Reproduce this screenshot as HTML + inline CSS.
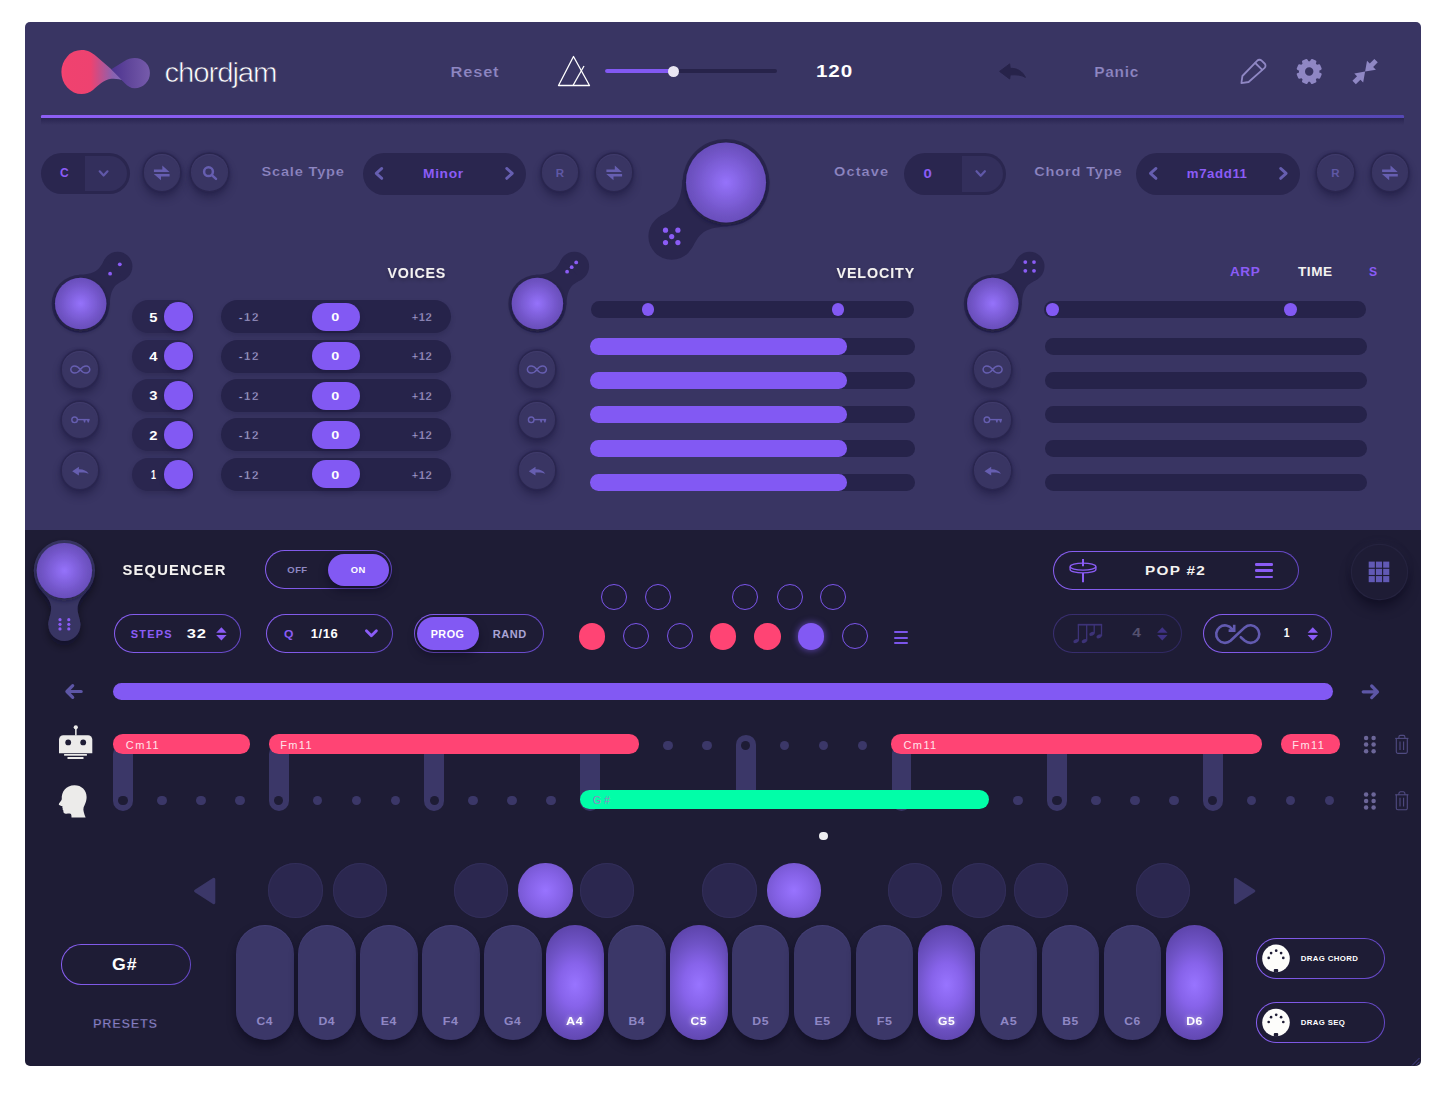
<!DOCTYPE html>
<html lang="en"><head><meta charset="utf-8"><title>chordjam</title>
<style>
html,body{margin:0;padding:0;background:#fff;}
body{width:1445px;height:1098px;position:relative;overflow:hidden;font-family:"Liberation Sans",sans-serif;}
#ui div{position:absolute;}
#ov{position:absolute;left:0;top:0;width:1445px;height:1098px;}
#ov text{font-family:"Liberation Sans",sans-serif;}
</style></head><body>
<div id="ui">
<div style="left:25px;top:22px;width:1395.5px;height:1044px;border-radius:5px;background:linear-gradient(#393563 0,#393563 508px,#1e1c35 508px);"></div>
<div  style="left:604.50px;top:69.00px;width:172.50px;height:4.00px;background:#27234a;border-radius:2.00px;"></div>
<div  style="left:604.50px;top:69.00px;width:70.00px;height:4.00px;background:#8259f3;border-radius:2.00px;"></div>
<div  style="left:668.00px;top:65.50px;width:11.00px;height:11.00px;background:#e9e6f2;border-radius:5.50px;"></div>
<div style="left:41.4px;top:118px;width:1362.8px;height:7px;background:linear-gradient(rgba(28,24,66,.55),rgba(28,24,66,0));"></div>
<div style="left:41.4px;top:115.4px;width:1362.8px;height:2.5px;background:linear-gradient(90deg,#8d5ff5,#7a56e0 45%,#5547b5);border-radius:1.3px 1.3px 0 0;"></div>
<div  style="left:41.00px;top:152.50px;width:89.00px;height:41.50px;background:#2a264f;border-radius:20.75px;"></div>
<div style="left:84.7px;top:155.5px;width:42.3px;height:35.5px;background:#332f5c;border-radius:0 17.75px 17.75px 0"></div>
<div  style="left:143.50px;top:154.00px;width:36.60px;height:36.60px;background:#393563;border-radius:18.30px;box-shadow:0 0 0 1.4px #2a264f,0 0 3px 1.5px rgba(36,32,76,.7),0 6px 8px 1px rgba(22,18,52,.42),inset 0 1px 1px rgba(90,84,140,.25);"></div>
<div  style="left:191.40px;top:154.00px;width:36.60px;height:36.60px;background:#393563;border-radius:18.30px;box-shadow:0 0 0 1.4px #2a264f,0 0 3px 1.5px rgba(36,32,76,.7),0 6px 8px 1px rgba(22,18,52,.42),inset 0 1px 1px rgba(90,84,140,.25);"></div>
<div  style="left:362.50px;top:152.50px;width:163.50px;height:42.00px;background:#2a264f;border-radius:21.00px;"></div>
<div  style="left:541.70px;top:154.30px;width:36.60px;height:36.60px;background:#393563;border-radius:18.30px;box-shadow:0 0 0 1.4px #2a264f,0 0 3px 1.5px rgba(36,32,76,.7),0 6px 8px 1px rgba(22,18,52,.42),inset 0 1px 1px rgba(90,84,140,.25);"></div>
<div  style="left:595.90px;top:154.30px;width:36.60px;height:36.60px;background:#393563;border-radius:18.30px;box-shadow:0 0 0 1.4px #2a264f,0 0 3px 1.5px rgba(36,32,76,.7),0 6px 8px 1px rgba(22,18,52,.42),inset 0 1px 1px rgba(90,84,140,.25);"></div>
<div  style="left:904.10px;top:152.50px;width:102.30px;height:42.00px;background:#2a264f;border-radius:21.00px;"></div>
<div style="left:961.6px;top:155.5px;width:41.799999999999955px;height:36px;background:#332f5c;border-radius:0 18.0px 18.0px 0"></div>
<div  style="left:1136.20px;top:152.50px;width:164.00px;height:42.00px;background:#2a264f;border-radius:21.00px;"></div>
<div  style="left:1317.10px;top:154.30px;width:36.60px;height:36.60px;background:#393563;border-radius:18.30px;box-shadow:0 0 0 1.4px #2a264f,0 0 3px 1.5px rgba(36,32,76,.7),0 6px 8px 1px rgba(22,18,52,.42),inset 0 1px 1px rgba(90,84,140,.25);"></div>
<div  style="left:1371.60px;top:154.30px;width:36.60px;height:36.60px;background:#393563;border-radius:18.30px;box-shadow:0 0 0 1.4px #2a264f,0 0 3px 1.5px rgba(36,32,76,.7),0 6px 8px 1px rgba(22,18,52,.42),inset 0 1px 1px rgba(90,84,140,.25);"></div>
<div  style="left:62.10px;top:351.20px;width:36.40px;height:36.40px;background:#393563;border-radius:18.20px;box-shadow:0 0 0 1.4px #2a264f,0 0 3px 1.5px rgba(36,32,76,.7),0 6px 8px 1px rgba(22,18,52,.42),inset 0 1px 1px rgba(90,84,140,.25);"></div>
<div  style="left:62.10px;top:401.60px;width:36.40px;height:36.40px;background:#393563;border-radius:18.20px;box-shadow:0 0 0 1.4px #2a264f,0 0 3px 1.5px rgba(36,32,76,.7),0 6px 8px 1px rgba(22,18,52,.42),inset 0 1px 1px rgba(90,84,140,.25);"></div>
<div  style="left:62.10px;top:452.40px;width:36.40px;height:36.40px;background:#393563;border-radius:18.20px;box-shadow:0 0 0 1.4px #2a264f,0 0 3px 1.5px rgba(36,32,76,.7),0 6px 8px 1px rgba(22,18,52,.42),inset 0 1px 1px rgba(90,84,140,.25);"></div>
<div  style="left:132.00px;top:300.10px;width:62.00px;height:33.00px;background:#2a264f;border-radius:16.50px;box-shadow:0 3px 5px rgba(22,18,52,.25);"></div>
<div  style="left:164.15px;top:302.35px;width:28.50px;height:28.50px;background:#8259f3;border-radius:14.25px;box-shadow:0 3px 5px rgba(22,18,52,.35);"></div>
<div  style="left:221.20px;top:300.10px;width:230.00px;height:33.00px;background:#26234a;border-radius:16.50px;box-shadow:0 3px 5px rgba(22,18,52,.2);"></div>
<div  style="left:311.80px;top:302.60px;width:48.00px;height:28.00px;background:#8259f3;border-radius:14.00px;box-shadow:0 3px 5px rgba(22,18,52,.35);"></div>
<div  style="left:132.00px;top:339.55px;width:62.00px;height:33.00px;background:#2a264f;border-radius:16.50px;box-shadow:0 3px 5px rgba(22,18,52,.25);"></div>
<div  style="left:164.15px;top:341.80px;width:28.50px;height:28.50px;background:#8259f3;border-radius:14.25px;box-shadow:0 3px 5px rgba(22,18,52,.35);"></div>
<div  style="left:221.20px;top:339.55px;width:230.00px;height:33.00px;background:#26234a;border-radius:16.50px;box-shadow:0 3px 5px rgba(22,18,52,.2);"></div>
<div  style="left:311.80px;top:342.05px;width:48.00px;height:28.00px;background:#8259f3;border-radius:14.00px;box-shadow:0 3px 5px rgba(22,18,52,.35);"></div>
<div  style="left:132.00px;top:379.00px;width:62.00px;height:33.00px;background:#2a264f;border-radius:16.50px;box-shadow:0 3px 5px rgba(22,18,52,.25);"></div>
<div  style="left:164.15px;top:381.25px;width:28.50px;height:28.50px;background:#8259f3;border-radius:14.25px;box-shadow:0 3px 5px rgba(22,18,52,.35);"></div>
<div  style="left:221.20px;top:379.00px;width:230.00px;height:33.00px;background:#26234a;border-radius:16.50px;box-shadow:0 3px 5px rgba(22,18,52,.2);"></div>
<div  style="left:311.80px;top:381.50px;width:48.00px;height:28.00px;background:#8259f3;border-radius:14.00px;box-shadow:0 3px 5px rgba(22,18,52,.35);"></div>
<div  style="left:132.00px;top:418.45px;width:62.00px;height:33.00px;background:#2a264f;border-radius:16.50px;box-shadow:0 3px 5px rgba(22,18,52,.25);"></div>
<div  style="left:164.15px;top:420.70px;width:28.50px;height:28.50px;background:#8259f3;border-radius:14.25px;box-shadow:0 3px 5px rgba(22,18,52,.35);"></div>
<div  style="left:221.20px;top:418.45px;width:230.00px;height:33.00px;background:#26234a;border-radius:16.50px;box-shadow:0 3px 5px rgba(22,18,52,.2);"></div>
<div  style="left:311.80px;top:420.95px;width:48.00px;height:28.00px;background:#8259f3;border-radius:14.00px;box-shadow:0 3px 5px rgba(22,18,52,.35);"></div>
<div  style="left:132.00px;top:457.90px;width:62.00px;height:33.00px;background:#2a264f;border-radius:16.50px;box-shadow:0 3px 5px rgba(22,18,52,.25);"></div>
<div  style="left:164.15px;top:460.15px;width:28.50px;height:28.50px;background:#8259f3;border-radius:14.25px;box-shadow:0 3px 5px rgba(22,18,52,.35);"></div>
<div  style="left:221.20px;top:457.90px;width:230.00px;height:33.00px;background:#26234a;border-radius:16.50px;box-shadow:0 3px 5px rgba(22,18,52,.2);"></div>
<div  style="left:311.80px;top:460.40px;width:48.00px;height:28.00px;background:#8259f3;border-radius:14.00px;box-shadow:0 3px 5px rgba(22,18,52,.35);"></div>
<div  style="left:518.70px;top:351.20px;width:36.40px;height:36.40px;background:#393563;border-radius:18.20px;box-shadow:0 0 0 1.4px #2a264f,0 0 3px 1.5px rgba(36,32,76,.7),0 6px 8px 1px rgba(22,18,52,.42),inset 0 1px 1px rgba(90,84,140,.25);"></div>
<div  style="left:518.70px;top:401.60px;width:36.40px;height:36.40px;background:#393563;border-radius:18.20px;box-shadow:0 0 0 1.4px #2a264f,0 0 3px 1.5px rgba(36,32,76,.7),0 6px 8px 1px rgba(22,18,52,.42),inset 0 1px 1px rgba(90,84,140,.25);"></div>
<div  style="left:518.70px;top:452.40px;width:36.40px;height:36.40px;background:#393563;border-radius:18.20px;box-shadow:0 0 0 1.4px #2a264f,0 0 3px 1.5px rgba(36,32,76,.7),0 6px 8px 1px rgba(22,18,52,.42),inset 0 1px 1px rgba(90,84,140,.25);"></div>
<div  style="left:591.20px;top:301.20px;width:322.40px;height:16.60px;background:#26234a;border-radius:8.30px;"></div>
<div  style="left:641.50px;top:303.10px;width:12.80px;height:12.80px;background:#8259f3;border-radius:6.40px;"></div>
<div  style="left:831.50px;top:303.10px;width:12.80px;height:12.80px;background:#8259f3;border-radius:6.40px;"></div>
<div  style="left:590.00px;top:338.10px;width:325.40px;height:16.60px;background:#26234a;border-radius:8.30px;"></div>
<div  style="left:590.00px;top:338.10px;width:257.40px;height:16.60px;background:#8259f3;border-radius:8.30px;"></div>
<div  style="left:590.00px;top:372.15px;width:325.40px;height:16.60px;background:#26234a;border-radius:8.30px;"></div>
<div  style="left:590.00px;top:372.15px;width:257.40px;height:16.60px;background:#8259f3;border-radius:8.30px;"></div>
<div  style="left:590.00px;top:406.20px;width:325.40px;height:16.60px;background:#26234a;border-radius:8.30px;"></div>
<div  style="left:590.00px;top:406.20px;width:257.40px;height:16.60px;background:#8259f3;border-radius:8.30px;"></div>
<div  style="left:590.00px;top:440.25px;width:325.40px;height:16.60px;background:#26234a;border-radius:8.30px;"></div>
<div  style="left:590.00px;top:440.25px;width:257.40px;height:16.60px;background:#8259f3;border-radius:8.30px;"></div>
<div  style="left:590.00px;top:474.30px;width:325.40px;height:16.60px;background:#26234a;border-radius:8.30px;"></div>
<div  style="left:590.00px;top:474.30px;width:257.40px;height:16.60px;background:#8259f3;border-radius:8.30px;"></div>
<div  style="left:974.40px;top:351.20px;width:36.40px;height:36.40px;background:#393563;border-radius:18.20px;box-shadow:0 0 0 1.4px #2a264f,0 0 3px 1.5px rgba(36,32,76,.7),0 6px 8px 1px rgba(22,18,52,.42),inset 0 1px 1px rgba(90,84,140,.25);"></div>
<div  style="left:974.40px;top:401.60px;width:36.40px;height:36.40px;background:#393563;border-radius:18.20px;box-shadow:0 0 0 1.4px #2a264f,0 0 3px 1.5px rgba(36,32,76,.7),0 6px 8px 1px rgba(22,18,52,.42),inset 0 1px 1px rgba(90,84,140,.25);"></div>
<div  style="left:974.40px;top:452.40px;width:36.40px;height:36.40px;background:#393563;border-radius:18.20px;box-shadow:0 0 0 1.4px #2a264f,0 0 3px 1.5px rgba(36,32,76,.7),0 6px 8px 1px rgba(22,18,52,.42),inset 0 1px 1px rgba(90,84,140,.25);"></div>
<div  style="left:1044.10px;top:301.20px;width:322.00px;height:16.60px;background:#26234a;border-radius:8.30px;"></div>
<div  style="left:1046.00px;top:303.10px;width:12.80px;height:12.80px;background:#8259f3;border-radius:6.40px;"></div>
<div  style="left:1284.30px;top:303.10px;width:12.80px;height:12.80px;background:#8259f3;border-radius:6.40px;"></div>
<div  style="left:1045.00px;top:338.10px;width:322.20px;height:16.60px;background:#26234a;border-radius:8.30px;"></div>
<div  style="left:1045.00px;top:372.15px;width:322.20px;height:16.60px;background:#26234a;border-radius:8.30px;"></div>
<div  style="left:1045.00px;top:406.20px;width:322.20px;height:16.60px;background:#26234a;border-radius:8.30px;"></div>
<div  style="left:1045.00px;top:440.25px;width:322.20px;height:16.60px;background:#26234a;border-radius:8.30px;"></div>
<div  style="left:1045.00px;top:474.30px;width:322.20px;height:16.60px;background:#26234a;border-radius:8.30px;"></div>
<div style="left:265.00px;top:550.00px;width:126.70px;height:39.40px;box-sizing:border-box;border-radius:19.7px;border:1.6px solid transparent;background:linear-gradient(#1e1c35,#1e1c35) padding-box,linear-gradient(100deg,#8a60f5,#6447c4) border-box;"></div>
<div  style="left:328.40px;top:553.50px;width:61.00px;height:32.60px;background:#8259f3;border-radius:16.30px;box-shadow:0 5px 8px rgba(10,8,30,.5);"></div>
<div style="left:114.10px;top:613.70px;width:127.10px;height:39.20px;box-sizing:border-box;border-radius:19.6px;border:1.6px solid transparent;background:linear-gradient(#1e1c35,#1e1c35) padding-box,linear-gradient(100deg,#8a60f5,#6447c4) border-box;"></div>
<div style="left:266.10px;top:613.70px;width:126.60px;height:39.20px;box-sizing:border-box;border-radius:19.6px;border:1.6px solid transparent;background:linear-gradient(#1e1c35,#1e1c35) padding-box,linear-gradient(100deg,#8a60f5,#6447c4) border-box;"></div>
<div style="left:414.10px;top:613.70px;width:129.80px;height:39.20px;box-sizing:border-box;border-radius:19.6px;border:1.6px solid transparent;background:linear-gradient(#1e1c35,#1e1c35) padding-box,linear-gradient(100deg,#8a60f5,#6447c4) border-box;"></div>
<div  style="left:417.00px;top:616.80px;width:61.50px;height:33.00px;background:#8259f3;border-radius:16.50px;box-shadow:0 5px 8px rgba(10,8,30,.5);"></div>
<div  style="left:600.90px;top:584.30px;width:26.00px;height:26.00px;background:transparent;border-radius:13.00px;box-sizing:border-box;border:1.75px solid #7b55ea;"></div>
<div  style="left:644.80px;top:584.30px;width:26.00px;height:26.00px;background:transparent;border-radius:13.00px;box-sizing:border-box;border:1.75px solid #7b55ea;"></div>
<div  style="left:732.30px;top:584.30px;width:26.00px;height:26.00px;background:transparent;border-radius:13.00px;box-sizing:border-box;border:1.75px solid #7b55ea;"></div>
<div  style="left:776.60px;top:584.30px;width:26.00px;height:26.00px;background:transparent;border-radius:13.00px;box-sizing:border-box;border:1.75px solid #7b55ea;"></div>
<div  style="left:819.90px;top:584.30px;width:26.00px;height:26.00px;background:transparent;border-radius:13.00px;box-sizing:border-box;border:1.75px solid #7b55ea;"></div>
<div  style="left:578.90px;top:623.00px;width:26.60px;height:26.60px;background:#ff4474;border-radius:13.30px;"></div>
<div  style="left:622.60px;top:623.30px;width:26.00px;height:26.00px;background:transparent;border-radius:13.00px;box-sizing:border-box;border:1.75px solid #7b55ea;"></div>
<div  style="left:666.50px;top:623.30px;width:26.00px;height:26.00px;background:transparent;border-radius:13.00px;box-sizing:border-box;border:1.75px solid #7b55ea;"></div>
<div  style="left:709.90px;top:623.00px;width:26.60px;height:26.60px;background:#ff4474;border-radius:13.30px;"></div>
<div  style="left:754.20px;top:623.00px;width:26.60px;height:26.60px;background:#ff4474;border-radius:13.30px;"></div>
<div  style="left:797.90px;top:623.00px;width:26.60px;height:26.60px;background:#8259f3;border-radius:13.30px;box-shadow:0 0 6px 1px rgba(130,89,243,.55);"></div>
<div  style="left:841.70px;top:623.30px;width:26.00px;height:26.00px;background:transparent;border-radius:13.00px;box-sizing:border-box;border:1.75px solid #7b55ea;"></div>
<div  style="left:893.80px;top:631.20px;width:14.40px;height:2.20px;background:#7b55ea;border-radius:1.00px;"></div>
<div  style="left:893.80px;top:636.50px;width:14.40px;height:2.20px;background:#7b55ea;border-radius:1.00px;"></div>
<div  style="left:893.80px;top:641.80px;width:14.40px;height:2.20px;background:#7b55ea;border-radius:1.00px;"></div>
<div style="left:1052.70px;top:550.70px;width:246.00px;height:39.40px;box-sizing:border-box;border-radius:19.7px;border:1.6px solid transparent;background:linear-gradient(#1e1c35,#1e1c35) padding-box,linear-gradient(100deg,#8a60f5,#6447c4) border-box;"></div>
<div  style="left:1255.10px;top:563.10px;width:18.30px;height:2.50px;background:#8b5cf6;border-radius:1.20px;"></div>
<div  style="left:1255.10px;top:569.40px;width:18.30px;height:2.50px;background:#8b5cf6;border-radius:1.20px;"></div>
<div  style="left:1255.10px;top:575.70px;width:18.30px;height:2.50px;background:#8b5cf6;border-radius:1.20px;"></div>
<div  style="left:1352.00px;top:544.60px;width:54.60px;height:54.60px;background:#1e1c35;border-radius:27.30px;box-shadow:0 0 0 1.2px #25233f,0 8px 12px rgba(8,6,24,.55),0 -3px 8px rgba(60,55,100,.10);"></div>
<div style="left:1052.70px;top:613.70px;width:129.30px;height:39.40px;box-sizing:border-box;border-radius:19.7px;border:1.6px solid transparent;background:linear-gradient(#1e1c35,#1e1c35) padding-box,linear-gradient(100deg,#3a2f72,#2f2860) border-box;"></div>
<div style="left:1202.80px;top:613.70px;width:129.70px;height:39.40px;box-sizing:border-box;border-radius:19.7px;border:1.6px solid transparent;background:linear-gradient(#1e1c35,#1e1c35) padding-box,linear-gradient(100deg,#8a60f5,#6447c4) border-box;"></div>
<div  style="left:113.00px;top:682.80px;width:1220.00px;height:17.40px;background:#8259f3;border-radius:8.70px;"></div>
<div  style="left:113.10px;top:744.00px;width:19.80px;height:66.50px;background:#3b3768;border-radius:9.90px;"></div>
<div  style="left:268.78px;top:744.00px;width:19.80px;height:66.50px;background:#3b3768;border-radius:9.90px;"></div>
<div  style="left:424.46px;top:744.00px;width:19.80px;height:66.50px;background:#3b3768;border-radius:9.90px;"></div>
<div  style="left:580.14px;top:744.00px;width:19.80px;height:66.50px;background:#3b3768;border-radius:9.90px;"></div>
<div  style="left:891.50px;top:744.00px;width:19.80px;height:66.50px;background:#3b3768;border-radius:9.90px;"></div>
<div  style="left:1047.18px;top:744.00px;width:19.80px;height:66.50px;background:#3b3768;border-radius:9.90px;"></div>
<div  style="left:1202.86px;top:744.00px;width:19.80px;height:66.50px;background:#3b3768;border-radius:9.90px;"></div>
<div  style="left:735.92px;top:734.60px;width:19.60px;height:66.00px;background:#3b3768;border-radius:9.80px;"></div>
<div  style="left:663.08px;top:740.50px;width:9.60px;height:9.60px;background:#3b3768;border-radius:4.80px;"></div>
<div  style="left:702.00px;top:740.50px;width:9.60px;height:9.60px;background:#3b3768;border-radius:4.80px;"></div>
<div  style="left:779.84px;top:740.50px;width:9.60px;height:9.60px;background:#3b3768;border-radius:4.80px;"></div>
<div  style="left:818.76px;top:740.50px;width:9.60px;height:9.60px;background:#3b3768;border-radius:4.80px;"></div>
<div  style="left:857.68px;top:740.50px;width:9.60px;height:9.60px;background:#3b3768;border-radius:4.80px;"></div>
<div  style="left:741.02px;top:740.60px;width:9.40px;height:9.40px;background:#1e1c35;border-radius:4.70px;"></div>
<div  style="left:118.30px;top:795.90px;width:9.40px;height:9.40px;background:#1e1c35;border-radius:4.70px;"></div>
<div  style="left:157.12px;top:795.80px;width:9.60px;height:9.60px;background:#3b3768;border-radius:4.80px;"></div>
<div  style="left:196.04px;top:795.80px;width:9.60px;height:9.60px;background:#3b3768;border-radius:4.80px;"></div>
<div  style="left:234.96px;top:795.80px;width:9.60px;height:9.60px;background:#3b3768;border-radius:4.80px;"></div>
<div  style="left:273.98px;top:795.90px;width:9.40px;height:9.40px;background:#1e1c35;border-radius:4.70px;"></div>
<div  style="left:312.80px;top:795.80px;width:9.60px;height:9.60px;background:#3b3768;border-radius:4.80px;"></div>
<div  style="left:351.72px;top:795.80px;width:9.60px;height:9.60px;background:#3b3768;border-radius:4.80px;"></div>
<div  style="left:390.64px;top:795.80px;width:9.60px;height:9.60px;background:#3b3768;border-radius:4.80px;"></div>
<div  style="left:429.66px;top:795.90px;width:9.40px;height:9.40px;background:#1e1c35;border-radius:4.70px;"></div>
<div  style="left:468.48px;top:795.80px;width:9.60px;height:9.60px;background:#3b3768;border-radius:4.80px;"></div>
<div  style="left:507.40px;top:795.80px;width:9.60px;height:9.60px;background:#3b3768;border-radius:4.80px;"></div>
<div  style="left:546.32px;top:795.80px;width:9.60px;height:9.60px;background:#3b3768;border-radius:4.80px;"></div>
<div  style="left:1013.36px;top:795.80px;width:9.60px;height:9.60px;background:#3b3768;border-radius:4.80px;"></div>
<div  style="left:1052.38px;top:795.90px;width:9.40px;height:9.40px;background:#1e1c35;border-radius:4.70px;"></div>
<div  style="left:1091.20px;top:795.80px;width:9.60px;height:9.60px;background:#3b3768;border-radius:4.80px;"></div>
<div  style="left:1130.12px;top:795.80px;width:9.60px;height:9.60px;background:#3b3768;border-radius:4.80px;"></div>
<div  style="left:1169.04px;top:795.80px;width:9.60px;height:9.60px;background:#3b3768;border-radius:4.80px;"></div>
<div  style="left:1208.06px;top:795.90px;width:9.40px;height:9.40px;background:#1e1c35;border-radius:4.70px;"></div>
<div  style="left:1246.88px;top:795.80px;width:9.60px;height:9.60px;background:#3b3768;border-radius:4.80px;"></div>
<div  style="left:1285.80px;top:795.80px;width:9.60px;height:9.60px;background:#3b3768;border-radius:4.80px;"></div>
<div  style="left:1324.72px;top:795.80px;width:9.60px;height:9.60px;background:#3b3768;border-radius:4.80px;"></div>
<div  style="left:113.00px;top:734.30px;width:136.76px;height:19.50px;background:#ff4474;border-radius:9.75px;"></div>
<div  style="left:268.68px;top:734.30px;width:370.28px;height:19.50px;background:#ff4474;border-radius:9.75px;"></div>
<div  style="left:891.40px;top:734.30px;width:370.28px;height:19.50px;background:#ff4474;border-radius:9.75px;"></div>
<div  style="left:1280.60px;top:734.30px;width:58.92px;height:19.50px;background:#ff4474;border-radius:9.75px;"></div>
<div  style="left:580.04px;top:789.90px;width:409.20px;height:19.50px;background:#01fea8;border-radius:9.75px;"></div>
<div  style="left:819.00px;top:831.70px;width:8.80px;height:8.80px;background:#efeef2;border-radius:4.40px;"></div>
<div  style="left:236.10px;top:924.70px;width:57.50px;height:115.30px;background:#3b3768;border-radius:57.65px;box-shadow:0 6px 8px rgba(8,6,24,.5),inset 0 1px 1px rgba(90,84,150,.35);"></div>
<div  style="left:298.08px;top:924.70px;width:57.50px;height:115.30px;background:#3b3768;border-radius:57.65px;box-shadow:0 6px 8px rgba(8,6,24,.5),inset 0 1px 1px rgba(90,84,150,.35);"></div>
<div  style="left:360.07px;top:924.70px;width:57.50px;height:115.30px;background:#3b3768;border-radius:57.65px;box-shadow:0 6px 8px rgba(8,6,24,.5),inset 0 1px 1px rgba(90,84,150,.35);"></div>
<div  style="left:422.05px;top:924.70px;width:57.50px;height:115.30px;background:#3b3768;border-radius:57.65px;box-shadow:0 6px 8px rgba(8,6,24,.5),inset 0 1px 1px rgba(90,84,150,.35);"></div>
<div  style="left:484.04px;top:924.70px;width:57.50px;height:115.30px;background:#3b3768;border-radius:57.65px;box-shadow:0 6px 8px rgba(8,6,24,.5),inset 0 1px 1px rgba(90,84,150,.35);"></div>
<div  style="left:546.02px;top:924.70px;width:57.50px;height:115.30px;background:radial-gradient(ellipse 72% 50% at 50% 52%,#9874ff 0%,#8763ea 38%,#6f53c6 72%,#5f46ae 100%);border-radius:57.65px;box-shadow:0 6px 8px rgba(8,6,24,.5);"></div>
<div  style="left:608.01px;top:924.70px;width:57.50px;height:115.30px;background:#3b3768;border-radius:57.65px;box-shadow:0 6px 8px rgba(8,6,24,.5),inset 0 1px 1px rgba(90,84,150,.35);"></div>
<div  style="left:670.00px;top:924.70px;width:57.50px;height:115.30px;background:radial-gradient(ellipse 72% 50% at 50% 52%,#9874ff 0%,#8763ea 38%,#6f53c6 72%,#5f46ae 100%);border-radius:57.65px;box-shadow:0 6px 8px rgba(8,6,24,.5);"></div>
<div  style="left:731.98px;top:924.70px;width:57.50px;height:115.30px;background:#3b3768;border-radius:57.65px;box-shadow:0 6px 8px rgba(8,6,24,.5),inset 0 1px 1px rgba(90,84,150,.35);"></div>
<div  style="left:793.97px;top:924.70px;width:57.50px;height:115.30px;background:#3b3768;border-radius:57.65px;box-shadow:0 6px 8px rgba(8,6,24,.5),inset 0 1px 1px rgba(90,84,150,.35);"></div>
<div  style="left:855.95px;top:924.70px;width:57.50px;height:115.30px;background:#3b3768;border-radius:57.65px;box-shadow:0 6px 8px rgba(8,6,24,.5),inset 0 1px 1px rgba(90,84,150,.35);"></div>
<div  style="left:917.94px;top:924.70px;width:57.50px;height:115.30px;background:radial-gradient(ellipse 72% 50% at 50% 52%,#9874ff 0%,#8763ea 38%,#6f53c6 72%,#5f46ae 100%);border-radius:57.65px;box-shadow:0 6px 8px rgba(8,6,24,.5);"></div>
<div  style="left:979.92px;top:924.70px;width:57.50px;height:115.30px;background:#3b3768;border-radius:57.65px;box-shadow:0 6px 8px rgba(8,6,24,.5),inset 0 1px 1px rgba(90,84,150,.35);"></div>
<div  style="left:1041.90px;top:924.70px;width:57.50px;height:115.30px;background:#3b3768;border-radius:57.65px;box-shadow:0 6px 8px rgba(8,6,24,.5),inset 0 1px 1px rgba(90,84,150,.35);"></div>
<div  style="left:1103.89px;top:924.70px;width:57.50px;height:115.30px;background:#3b3768;border-radius:57.65px;box-shadow:0 6px 8px rgba(8,6,24,.5),inset 0 1px 1px rgba(90,84,150,.35);"></div>
<div  style="left:1165.88px;top:924.70px;width:57.50px;height:115.30px;background:radial-gradient(ellipse 72% 50% at 50% 52%,#9874ff 0%,#8763ea 38%,#6f53c6 72%,#5f46ae 100%);border-radius:57.65px;box-shadow:0 6px 8px rgba(8,6,24,.5);"></div>
<div  style="left:268.40px;top:863.40px;width:54.40px;height:54.40px;background:#2b274f;border-radius:27.20px;box-shadow:inset 0 0 0 1px #322e59;"></div>
<div  style="left:332.80px;top:863.40px;width:54.40px;height:54.40px;background:#2b274f;border-radius:27.20px;box-shadow:inset 0 0 0 1px #322e59;"></div>
<div  style="left:453.80px;top:863.40px;width:54.40px;height:54.40px;background:#2b274f;border-radius:27.20px;box-shadow:inset 0 0 0 1px #322e59;"></div>
<div  style="left:518.20px;top:863.30px;width:54.40px;height:54.40px;background:radial-gradient(circle at 50% 50%,#9873ff 0%,#8562e6 45%,#6a4ebf 100%);border-radius:27.20px;"></div>
<div  style="left:580.10px;top:863.40px;width:54.40px;height:54.40px;background:#2b274f;border-radius:27.20px;box-shadow:inset 0 0 0 1px #322e59;"></div>
<div  style="left:702.30px;top:863.40px;width:54.40px;height:54.40px;background:#2b274f;border-radius:27.20px;box-shadow:inset 0 0 0 1px #322e59;"></div>
<div  style="left:766.80px;top:863.30px;width:54.40px;height:54.40px;background:radial-gradient(circle at 50% 50%,#9873ff 0%,#8562e6 45%,#6a4ebf 100%);border-radius:27.20px;"></div>
<div  style="left:888.10px;top:863.40px;width:54.40px;height:54.40px;background:#2b274f;border-radius:27.20px;box-shadow:inset 0 0 0 1px #322e59;"></div>
<div  style="left:952.00px;top:863.40px;width:54.40px;height:54.40px;background:#2b274f;border-radius:27.20px;box-shadow:inset 0 0 0 1px #322e59;"></div>
<div  style="left:1014.10px;top:863.40px;width:54.40px;height:54.40px;background:#2b274f;border-radius:27.20px;box-shadow:inset 0 0 0 1px #322e59;"></div>
<div  style="left:1136.00px;top:863.40px;width:54.40px;height:54.40px;background:#2b274f;border-radius:27.20px;box-shadow:inset 0 0 0 1px #322e59;"></div>
<div style="left:61.00px;top:944.00px;width:129.50px;height:40.50px;box-sizing:border-box;border-radius:20.25px;border:1.6px solid transparent;background:linear-gradient(#1e1c35,#1e1c35) padding-box,linear-gradient(100deg,#8a60f5,#6447c4) border-box;"></div>
<div style="left:1255.60px;top:938.00px;width:129.70px;height:40.70px;box-sizing:border-box;border-radius:20.35px;border:1.6px solid transparent;background:linear-gradient(#1e1c35,#1e1c35) padding-box,linear-gradient(100deg,#8a60f5,#6447c4) border-box;border-width:1.8px;"></div>
<div style="left:1255.60px;top:1002.10px;width:129.70px;height:40.70px;box-sizing:border-box;border-radius:20.35px;border:1.6px solid transparent;background:linear-gradient(#1e1c35,#1e1c35) padding-box,linear-gradient(100deg,#8a60f5,#6447c4) border-box;border-width:1.8px;"></div>
</div>
<svg id="ov" viewBox="0 0 1445 1098" width="1445" height="1098">
<defs>
<filter id="sh1" x="-30%" y="-30%" width="160%" height="160%"><feDropShadow dx="0" dy="5" stdDeviation="5" flood-color="#08061a" flood-opacity="0.45"/></filter>
<filter id="sh2" x="-30%" y="-30%" width="160%" height="160%"><feDropShadow dx="0" dy="2.5" stdDeviation="2.5" flood-color="#141032" flood-opacity="0.55"/></filter>
<filter id="tsh" x="-20%" y="-60%" width="140%" height="260%"><feDropShadow dx="0" dy="2" stdDeviation="2" flood-color="#0c0a24" flood-opacity="0.3"/></filter>
<filter id="glow" x="-50%" y="-100%" width="200%" height="300%"><feDropShadow dx="0" dy="0" stdDeviation="2.2" flood-color="#ffffff" flood-opacity="0.55"/></filter>
</defs>
<defs>
<linearGradient id="lg1" gradientUnits="userSpaceOnUse" x1="59" y1="0" x2="125" y2="0"><stop offset="0" stop-color="#fb4373"/><stop offset="0.1" stop-color="#f0426f"/><stop offset="0.48" stop-color="#ee4270"/><stop offset="0.82" stop-color="#8a62b0"/><stop offset="1" stop-color="#7c6bbd"/></linearGradient>
<linearGradient id="lg2" gradientUnits="userSpaceOnUse" x1="111" y1="0" x2="151" y2="0"><stop offset="0" stop-color="#4c338f"/><stop offset="0.5" stop-color="#62489c"/><stop offset="1" stop-color="#775cac"/></linearGradient>
<radialGradient id="ball" cx="0.5" cy="0.5" r="0.5"><stop offset="0" stop-color="#9572fb"/><stop offset="0.85" stop-color="#6e52c2"/><stop offset="1" stop-color="#6a4fbd"/></radialGradient>
</defs>
<path d="M81.6 49.9 C88 49.9 92 52.5 96 56 L111.3 69.3 L124.5 81.2 C120 79 116 78.5 111.3 78.8 C104 79.5 98 86 93 90 C89.5 92.8 86 94.1 81.6 94.1 A20.2 22.1 0 0 1 81.6 49.9 Z" fill="url(#lg1)"/>
<path d="M111.3 69.3 L124.2 61.2 C127.6 59 131 57.9 134.7 57.9 A15.2 15.2 0 0 1 134.7 88.3 C130.6 88.3 127.6 86.2 124.8 83.3 Z" fill="url(#lg2)"/>
<text transform="translate(164.50 82.00) scale(1.090 1)" font-size="27" fill="#ffffff" font-weight="400" letter-spacing="-1.04" stroke="#393563" stroke-width="0.6">chordjam</text>
<text transform="translate(450.50 76.90) scale(1.120 1)" font-size="14.7" fill="#8f87c4" font-weight="700" letter-spacing="0.73" stroke="#393563" stroke-width="0.2">Reset</text>
<g fill="none" stroke="#fff" stroke-width="1.3" stroke-linejoin="round"><path d="M573.5 56.5 L558.5 85.5 L589.5 85.5 Z"/><path d="M573 85.5 L584 66"/></g>
<text transform="translate(815.90 77.40) scale(1.215 1)" font-size="17" fill="#ffffff" font-weight="700" letter-spacing="0.77" >120</text>
<path d="M999.6 71.4 L1009.7 63.9 L1010.2 68.3 C1017.5 68.1 1022.8 71.6 1025.4 77.4 C1021.5 75 1017 74.6 1010.2 74.9 L1009.7 79 Z" fill="#27234a" stroke="#27234a" stroke-width="1" stroke-linejoin="round"/>
<text transform="translate(1094.20 76.50) scale(1.053 1)" font-size="14.7" fill="#8f87c4" font-weight="700" letter-spacing="0.66" stroke="#393563" stroke-width="0.2">Panic</text>
<g fill="none" stroke="#8f87c4" stroke-width="1.8" stroke-linejoin="round" stroke-linecap="round"><path d="M1241.4 83.1 L1242.4 76 L1257.3 60.7 A3 3 0 0 1 1261.6 60.6 L1264.6 63.5 A3 3 0 0 1 1264.6 67.8 L1248.6 82 Z"/><path d="M1255.3 63 L1262 69.6"/></g>
<path d="M1318.30 72.87 L1320.58 74.23 L1319.18 77.61 L1316.60 76.97 L1314.67 78.90 L1315.31 81.48 L1311.93 82.88 L1310.57 80.60 L1307.83 80.60 L1306.47 82.88 L1303.09 81.48 L1303.73 78.90 L1301.80 76.97 L1299.22 77.61 L1297.82 74.23 L1300.10 72.87 L1300.10 70.13 L1297.82 68.77 L1299.22 65.39 L1301.80 66.03 L1303.73 64.10 L1303.09 61.52 L1306.47 60.12 L1307.83 62.40 L1310.57 62.40 L1311.93 60.12 L1315.31 61.52 L1314.67 64.10 L1316.60 66.03 L1319.18 65.39 L1320.58 68.77 L1318.30 70.13Z M1314.5 71.5 A5.3 5.3 0 1 0 1303.9 71.5 A5.3 5.3 0 1 0 1314.5 71.5Z" fill="#8f87c4" fill-rule="evenodd" stroke="#8f87c4" stroke-width="2.2" stroke-linejoin="round"/>
<g fill="#8f87c4"><path d="M1365.10 71.60 L1375.92 69.69 L1373.16 66.93 L1377.76 62.34 L1374.36 58.94 L1369.77 63.54 L1367.01 60.78 Z"/><path d="M1365.10 71.60 L1354.28 73.51 L1357.04 76.27 L1352.44 80.86 L1355.84 84.26 L1360.43 79.66 L1363.19 82.42 Z"/></g>
<text transform="translate(60.00 177.30) scale(0.927 1)" font-size="13" fill="#8b5cf6" font-weight="700" letter-spacing="0.00" >C</text>
<path d="M99.69999999999999 171.3 L103.6 175.5 L107.5 171.3" fill="none" stroke="#6058a8" stroke-width="2.2" stroke-linecap="round" stroke-linejoin="round"/>
<g fill="#665eb0"><path d="M153.89999999999998 169.4 H162.29999999999998 V165.5 L169.5 171.9 H153.89999999999998 Z"/><path d="M169.6 176.4 H161.0 V180.20000000000002 L153.79999999999998 173.9 H169.6 Z"/></g>
<g fill="none" stroke="#665eb0" stroke-width="2.5" stroke-linecap="round"><circle cx="208.5" cy="171.7" r="4.4"/><path d="M212.4 175.6 L216 178.9"/></g>
<text transform="translate(261.40 176.10) scale(1.120 1)" font-size="13" fill="#8f87c4" font-weight="700" letter-spacing="0.75" stroke="#393563" stroke-width="0.2">Scale Type</text>
<path d="M381.8 168.4 L376.2 173.4 L381.8 178.4" fill="none" stroke="#665eb0" stroke-width="2.8" stroke-linecap="round" stroke-linejoin="round"/>
<path d="M506.7 168.4 L512.3 173.4 L506.7 178.4" fill="none" stroke="#665eb0" stroke-width="2.8" stroke-linecap="round" stroke-linejoin="round"/>
<text transform="translate(423.00 177.50) scale(1.097 1)" font-size="12.6" fill="#8b5cf6" font-weight="700" letter-spacing="0.57" >Minor</text>
<text x="560.00" y="177.10" font-size="11.5" fill="#5f58a5" font-weight="700" letter-spacing="0" text-anchor="middle" >R</text>
<g fill="#665eb0"><path d="M606.4000000000001 169.4 H614.8000000000001 V165.5 L622.0 171.9 H606.4000000000001 Z"/><path d="M622.1 176.4 H613.5 V180.20000000000002 L606.3000000000001 173.9 H622.1 Z"/></g>
<g fill="#2a264f" ><circle cx="726" cy="182.6" r="43.6"/><circle cx="671.7" cy="236.4" r="23.3"/><path d="M682.49 179.75 C680.66 207.74 672.73 208.71 659.83 216.35 L691.64 248.45 C699.40 235.62 700.44 227.71 728.45 226.13Z"/></g>
<circle cx="726" cy="182.4" r="40" fill="url(#ball)" filter="url(#sh2)"/>
<circle cx="665.5" cy="230.20000000000002" r="2.6" fill="#8b5cf6"/>
<circle cx="677.9000000000001" cy="230.20000000000002" r="2.6" fill="#8b5cf6"/>
<circle cx="671.7" cy="236.6" r="2.6" fill="#8b5cf6"/>
<circle cx="665.5" cy="242.6" r="2.6" fill="#8b5cf6"/>
<circle cx="677.9000000000001" cy="242.6" r="2.6" fill="#8b5cf6"/>
<text transform="translate(834.10 176.30) scale(1.120 1)" font-size="13" fill="#8f87c4" font-weight="700" letter-spacing="0.97" stroke="#393563" stroke-width="0.2">Octave</text>
<text transform="translate(923.40 177.50) scale(1.204 1)" font-size="12.4" fill="#8b5cf6" font-weight="700" letter-spacing="0.00" >0</text>
<path d="M976.5 171.2 L980.7 175.8 L984.9000000000001 171.2" fill="none" stroke="#6058a8" stroke-width="2.2" stroke-linecap="round" stroke-linejoin="round"/>
<text transform="translate(1034.20 176.30) scale(1.120 1)" font-size="13" fill="#8f87c4" font-weight="700" letter-spacing="0.76" stroke="#393563" stroke-width="0.2">Chord Type</text>
<path d="M1156.0 168.4 L1150.4 173.4 L1156.0 178.4" fill="none" stroke="#665eb0" stroke-width="2.8" stroke-linecap="round" stroke-linejoin="round"/>
<path d="M1280.6000000000001 168.4 L1286.2 173.4 L1280.6000000000001 178.4" fill="none" stroke="#665eb0" stroke-width="2.8" stroke-linecap="round" stroke-linejoin="round"/>
<text transform="translate(1186.80 177.50) scale(1.050 1)" font-size="12.6" fill="#8b5cf6" font-weight="700" letter-spacing="0.57" >m7add11</text>
<text x="1335.40" y="177.10" font-size="11.5" fill="#5f58a5" font-weight="700" letter-spacing="0" text-anchor="middle" >R</text>
<g fill="#665eb0"><path d="M1382.1000000000001 169.4 H1390.5 V165.5 L1397.7 171.9 H1382.1000000000001 Z"/><path d="M1397.8000000000002 176.4 H1389.2 V180.20000000000002 L1382.0 173.9 H1397.8000000000002 Z"/></g>
<g fill="#2a264f" ><circle cx="80.7" cy="303.8" r="29"/><circle cx="117.6" cy="266.5" r="14.8"/><path d="M109.66 305.31 C110.71 285.14 116.52 284.50 125.31 279.13 L104.89 258.92 C99.61 267.78 99.03 273.59 78.88 274.86Z"/></g>
<circle cx="80.7" cy="303.5" r="25.7" fill="url(#ball)" filter="url(#sh2)"/>
<circle cx="119.8" cy="264.3" r="1.9" fill="#8b5cf6"/>
<circle cx="110.1" cy="273.7" r="1.9" fill="#8b5cf6"/>
<path d="M80.3 369.6 C82.5 366.6 84.3 366.1 86.1 366.1 A3.7 3.5 0 0 1 86.1 373.1 C84.3 373.1 82.5 372.6 80.3 369.6 C78.1 366.6 76.3 366.1 74.5 366.1 A3.7 3.5 0 0 0 74.5 373.1 C76.3 373.1 78.1 372.6 80.3 369.6Z" fill="none" stroke="#665eb0" stroke-width="1.5"/>
<g fill="none" stroke="#665eb0" stroke-width="1.4"><circle cx="74.6" cy="419.8" r="2.8"/><path d="M77.39999999999999 419.6 H89.6"/></g><path d="M83.3 419.8 h2.4 l-0.5 2.6 h-1.2z M86.89999999999999 419.8 h2.6 l-0.6 2.6 h-1.2z" fill="#665eb0"/>
<path d="M72.2 471.20000000000005 L78.89999999999999 466.70000000000005 L78.89999999999999 469.3 C83.3 469.20000000000005 86.8 470.8 88.7 473.8 C85.8 472.40000000000003 82.8 472.3 78.89999999999999 472.6 L78.89999999999999 475.6 Z" fill="#665eb0"/>
<text transform="translate(387.60 278.20) scale(1.020 1)" font-size="14" fill="#f4f2f0" font-weight="700" letter-spacing="0.73" filter="url(#tsh)">VOICES</text>
<text transform="translate(149.30 321.50) scale(1.092 1)" font-size="13.5" fill="#ffffff" font-weight="700" letter-spacing="0.00" >5</text>
<text transform="translate(238.70 320.70) scale(1.050 1)" font-size="11" fill="#aaa4d6" font-weight="700" letter-spacing="1.48" stroke="#26234a" stroke-width="0.35">-12</text>
<text transform="translate(411.80 320.70) scale(1.013 1)" font-size="11" fill="#aaa4d6" font-weight="700" letter-spacing="0.49" stroke="#26234a" stroke-width="0.35">+12</text>
<text transform="translate(331.20 320.80) scale(1.251 1)" font-size="11.5" fill="#ffffff" font-weight="700" letter-spacing="0.00" >0</text>
<text transform="translate(149.30 360.95) scale(1.092 1)" font-size="13.5" fill="#ffffff" font-weight="700" letter-spacing="0.00" >4</text>
<text transform="translate(238.70 360.15) scale(1.050 1)" font-size="11" fill="#aaa4d6" font-weight="700" letter-spacing="1.48" stroke="#26234a" stroke-width="0.35">-12</text>
<text transform="translate(411.80 360.15) scale(1.013 1)" font-size="11" fill="#aaa4d6" font-weight="700" letter-spacing="0.49" stroke="#26234a" stroke-width="0.35">+12</text>
<text transform="translate(331.20 360.25) scale(1.251 1)" font-size="11.5" fill="#ffffff" font-weight="700" letter-spacing="0.00" >0</text>
<text transform="translate(149.30 400.40) scale(1.092 1)" font-size="13.5" fill="#ffffff" font-weight="700" letter-spacing="0.00" >3</text>
<text transform="translate(238.70 399.60) scale(1.050 1)" font-size="11" fill="#aaa4d6" font-weight="700" letter-spacing="1.48" stroke="#26234a" stroke-width="0.35">-12</text>
<text transform="translate(411.80 399.60) scale(1.013 1)" font-size="11" fill="#aaa4d6" font-weight="700" letter-spacing="0.49" stroke="#26234a" stroke-width="0.35">+12</text>
<text transform="translate(331.20 399.70) scale(1.251 1)" font-size="11.5" fill="#ffffff" font-weight="700" letter-spacing="0.00" >0</text>
<text transform="translate(149.30 439.85) scale(1.092 1)" font-size="13.5" fill="#ffffff" font-weight="700" letter-spacing="0.00" >2</text>
<text transform="translate(238.70 439.05) scale(1.050 1)" font-size="11" fill="#aaa4d6" font-weight="700" letter-spacing="1.48" stroke="#26234a" stroke-width="0.35">-12</text>
<text transform="translate(411.80 439.05) scale(1.013 1)" font-size="11" fill="#aaa4d6" font-weight="700" letter-spacing="0.49" stroke="#26234a" stroke-width="0.35">+12</text>
<text transform="translate(331.20 439.15) scale(1.251 1)" font-size="11.5" fill="#ffffff" font-weight="700" letter-spacing="0.00" >0</text>
<text transform="translate(150.90 479.30) scale(0.666 1)" font-size="13.5" fill="#ffffff" font-weight="700" letter-spacing="0.00" >1</text>
<text transform="translate(238.70 478.50) scale(1.050 1)" font-size="11" fill="#aaa4d6" font-weight="700" letter-spacing="1.48" stroke="#26234a" stroke-width="0.35">-12</text>
<text transform="translate(411.80 478.50) scale(1.013 1)" font-size="11" fill="#aaa4d6" font-weight="700" letter-spacing="0.49" stroke="#26234a" stroke-width="0.35">+12</text>
<text transform="translate(331.20 478.60) scale(1.251 1)" font-size="11.5" fill="#ffffff" font-weight="700" letter-spacing="0.00" >0</text>
<g fill="#2a264f" ><circle cx="537.4" cy="303.8" r="29"/><circle cx="574.3" cy="266.5" r="14.8"/><path d="M566.36 305.31 C567.41 285.14 573.22 284.50 582.01 279.13 L561.59 258.92 C556.31 267.78 555.73 273.59 535.58 274.86Z"/></g>
<circle cx="537.4" cy="303.5" r="25.7" fill="url(#ball)" filter="url(#sh2)"/>
<circle cx="567.0999999999999" cy="271.7" r="1.9" fill="#8b5cf6"/>
<circle cx="571.6999999999999" cy="267.2" r="1.9" fill="#8b5cf6"/>
<circle cx="576.1999999999999" cy="262.4" r="1.9" fill="#8b5cf6"/>
<path d="M536.9 369.6 C539.1 366.6 540.9 366.1 542.6999999999999 366.1 A3.7 3.5 0 0 1 542.6999999999999 373.1 C540.9 373.1 539.1 372.6 536.9 369.6 C534.6999999999999 366.6 532.9 366.1 531.1 366.1 A3.7 3.5 0 0 0 531.1 373.1 C532.9 373.1 534.6999999999999 372.6 536.9 369.6Z" fill="none" stroke="#665eb0" stroke-width="1.5"/>
<g fill="none" stroke="#665eb0" stroke-width="1.4"><circle cx="531.1999999999999" cy="419.8" r="2.8"/><path d="M534.0 419.6 H546.1999999999999"/></g><path d="M539.9 419.8 h2.4 l-0.5 2.6 h-1.2z M543.5 419.8 h2.6 l-0.6 2.6 h-1.2z" fill="#665eb0"/>
<path d="M528.8 471.20000000000005 L535.5 466.70000000000005 L535.5 469.3 C539.9 469.20000000000005 543.4 470.8 545.3 473.8 C542.4 472.40000000000003 539.4 472.3 535.5 472.6 L535.5 475.6 Z" fill="#665eb0"/>
<text transform="translate(836.50 278.20) scale(1.020 1)" font-size="14" fill="#f4f2f0" font-weight="700" letter-spacing="0.89" filter="url(#tsh)">VELOCITY</text>
<g fill="#2a264f" ><circle cx="992.8" cy="303.8" r="29"/><circle cx="1029.7" cy="266.5" r="14.8"/><path d="M1021.76 305.31 C1022.81 285.14 1028.62 284.50 1037.41 279.13 L1016.99 258.92 C1011.71 267.78 1011.13 273.59 990.98 274.86Z"/></g>
<circle cx="992.8" cy="303.5" r="25.7" fill="url(#ball)" filter="url(#sh2)"/>
<circle cx="1025.3" cy="262.1" r="1.9" fill="#8b5cf6"/>
<circle cx="1034.0" cy="262.1" r="1.9" fill="#8b5cf6"/>
<circle cx="1025.3" cy="270.8" r="1.9" fill="#8b5cf6"/>
<circle cx="1034.0" cy="270.8" r="1.9" fill="#8b5cf6"/>
<path d="M992.6 369.6 C994.8000000000001 366.6 996.6 366.1 998.4 366.1 A3.7 3.5 0 0 1 998.4 373.1 C996.6 373.1 994.8000000000001 372.6 992.6 369.6 C990.4 366.6 988.6 366.1 986.8000000000001 366.1 A3.7 3.5 0 0 0 986.8000000000001 373.1 C988.6 373.1 990.4 372.6 992.6 369.6Z" fill="none" stroke="#665eb0" stroke-width="1.5"/>
<g fill="none" stroke="#665eb0" stroke-width="1.4"><circle cx="986.9" cy="419.8" r="2.8"/><path d="M989.7 419.6 H1001.9"/></g><path d="M995.6 419.8 h2.4 l-0.5 2.6 h-1.2z M999.2 419.8 h2.6 l-0.6 2.6 h-1.2z" fill="#665eb0"/>
<path d="M984.5 471.20000000000005 L991.2 466.70000000000005 L991.2 469.3 C995.6 469.20000000000005 999.1 470.8 1001.0 473.8 C998.1 472.40000000000003 995.1 472.3 991.2 472.6 L991.2 475.6 Z" fill="#665eb0"/>
<text transform="translate(1230.00 276.10) scale(1.083 1)" font-size="12.5" fill="#8b5cf6" font-weight="700" letter-spacing="0.56" >ARP</text>
<text transform="translate(1297.90 276.10) scale(1.087 1)" font-size="12.5" fill="#f4f2f0" font-weight="700" letter-spacing="0.56" >TIME</text>
<text transform="translate(1369.10 276.10) scale(0.972 1)" font-size="12.5" fill="#8b5cf6" font-weight="700" letter-spacing="0.00" >S</text>
<g filter="url(#sh1)"><g fill="#393563" ><circle cx="64.4" cy="570.6" r="30.6"/><circle cx="64.4" cy="625" r="16"/><path d="M42.33 591.80 C57.79 607.88 48.24 613.56 48.40 625.22 L80.40 625.22 C80.56 613.56 71.01 607.88 86.47 591.80Z"/></g></g>
<circle cx="64.4" cy="570.6" r="27.7" fill="url(#ball)" filter="url(#sh2)"/>
<circle cx="60.00000000000001" cy="619.6999999999999" r="1.6" fill="#8b5cf6"/>
<circle cx="60.00000000000001" cy="624.3" r="1.6" fill="#8b5cf6"/>
<circle cx="60.00000000000001" cy="628.9" r="1.6" fill="#8b5cf6"/>
<circle cx="68.80000000000001" cy="619.6999999999999" r="1.6" fill="#8b5cf6"/>
<circle cx="68.80000000000001" cy="624.3" r="1.6" fill="#8b5cf6"/>
<circle cx="68.80000000000001" cy="628.9" r="1.6" fill="#8b5cf6"/>
<text transform="translate(122.40 575.30) scale(1.020 1)" font-size="14.5" fill="#f4f2f0" font-weight="700" letter-spacing="1.16" filter="url(#tsh)">SEQUENCER</text>
<text transform="translate(287.30 573.30) scale(1.035 1)" font-size="9.2" fill="#8f87c4" font-weight="700" letter-spacing="0.41" >OFF</text>
<text transform="translate(350.80 573.30) scale(1.020 1)" font-size="9.2" fill="#ffffff" font-weight="700" letter-spacing="0.41" >ON</text>
<text transform="translate(130.70 637.60) scale(1.000 1)" font-size="11" fill="#8b5cf6" font-weight="700" letter-spacing="1.21" >STEPS</text>
<text transform="translate(186.80 637.90) scale(1.270 1)" font-size="13" fill="#ffffff" font-weight="700" letter-spacing="0.58" >32</text>
<g fill="#8b5cf6"><path d="M216.20000000000002 632.7 L221.4 627.3000000000001 L226.6 632.7 Z"/><path d="M216.20000000000002 635.1 L221.4 640.5 L226.6 635.1 Z"/></g>
<text transform="translate(284.10 637.60) scale(1.151 1)" font-size="10.5" fill="#8b5cf6" font-weight="700" letter-spacing="0.00" >Q</text>
<text transform="translate(310.70 637.90) scale(0.998 1)" font-size="13" fill="#ffffff" font-weight="700" letter-spacing="0.58" >1/16</text>
<path d="M366.4 630.7 L371.4 635.8 L376.4 630.7" fill="none" stroke="#8b5cf6" stroke-width="2.8" stroke-linecap="round" stroke-linejoin="round"/>
<text transform="translate(430.70 637.50) scale(1.036 1)" font-size="10.4" fill="#ffffff" font-weight="700" letter-spacing="0.47" >PROG</text>
<text transform="translate(492.80 637.50) scale(1.062 1)" font-size="10.4" fill="#aaa4d6" font-weight="700" letter-spacing="0.47" >RAND</text>
<g fill="none" stroke="#8b5cf6" stroke-width="1.35"><ellipse cx="1083" cy="566.6" rx="12.9" ry="3.5"/><path d="M1070.1 566.8 v2.6 a12.9 3.5 0 0 0 25.8 0 v-2.6"/><path d="M1083 558.9 V566.2 M1083 573 V582.2" stroke-width="2"/></g>
<text transform="translate(1145.10 574.70) scale(1.120 1)" font-size="13.7" fill="#f4f2f0" font-weight="700" letter-spacing="1.13" >POP #2</text>
<rect x="1368.70" y="561.60" width="6.1" height="6.1" fill="#6159b5"/>
<rect x="1368.70" y="568.84" width="6.1" height="6.1" fill="#6159b5"/>
<rect x="1368.70" y="576.08" width="6.1" height="6.1" fill="#6159b5"/>
<rect x="1375.94" y="561.60" width="6.1" height="6.1" fill="#6159b5"/>
<rect x="1375.94" y="568.84" width="6.1" height="6.1" fill="#6159b5"/>
<rect x="1375.94" y="576.08" width="6.1" height="6.1" fill="#6159b5"/>
<rect x="1383.18" y="561.60" width="6.1" height="6.1" fill="#6159b5"/>
<rect x="1383.18" y="568.84" width="6.1" height="6.1" fill="#6159b5"/>
<rect x="1383.18" y="576.08" width="6.1" height="6.1" fill="#6159b5"/>
<g fill="none" stroke="#3d3378" stroke-width="1.3"><path d="M1078.4 624.5 V640.7 M1086.7 624.5 V640.7 M1094.2 624.5 V633.6 M1101.5 624.5 V636.1"/><path d="M1077.75 624.7 H1102.15" stroke-width="1.7"/></g>
<g fill="#3d3378"><ellipse cx="1076" cy="641.1" rx="2.8" ry="1.9" transform="rotate(-25 1076 641.1)"/><ellipse cx="1084.3" cy="641.1" rx="2.8" ry="1.9" transform="rotate(-25 1084.3 641.1)"/><ellipse cx="1091.9" cy="633.9" rx="2.8" ry="1.9" transform="rotate(-25 1091.9 633.9)"/><ellipse cx="1099.1" cy="636.4" rx="2.8" ry="1.9" transform="rotate(-25 1099.1 636.4)"/></g>
<text transform="translate(1132.20 637.30) scale(1.222 1)" font-size="12.8" fill="#55516f" font-weight="700" letter-spacing="0.00" >4</text>
<g fill="#3f3285"><path d="M1157.1 632.7 L1162.3 627.3000000000001 L1167.5 632.7 Z"/><path d="M1157.1 635.1 L1162.3 640.5 L1167.5 635.1 Z"/></g>
<g fill="none" stroke="#625ab0" stroke-width="2.6" stroke-linecap="round" stroke-linejoin="round"><path d="M1232 629.1 A8.7 8.7 0 1 0 1230.5 640.8 L1244.8 627.4 A8.8 8.8 0 1 1 1244.8 640.8 L1240.8 637.2"/><path d="M1234.2 624.8 V630.6 H1228.6" stroke-linecap="butt" stroke-linejoin="miter"/></g>
<text transform="translate(1283.70 637.40) scale(0.815 1)" font-size="12.8" fill="#ffffff" font-weight="700" letter-spacing="0.00" >1</text>
<g fill="#8b5cf6"><path d="M1307.6 632.7 L1312.8 627.3000000000001 L1318.0 632.7 Z"/><path d="M1307.6 635.1 L1312.8 640.5 L1318.0 635.1 Z"/></g>
<path d="M81.2 691.5 H67.2 M72.7 685.7 L66.9 691.5 L72.7 697.3" fill="none" stroke="#5d56a6" stroke-width="3.2" stroke-linecap="round" stroke-linejoin="round"/>
<path d="M1363.2 691.8 H1377.2 M1371.7 686.0 L1377.5 691.8 L1371.7 697.5999999999999" fill="none" stroke="#5d56a6" stroke-width="3.2" stroke-linecap="round" stroke-linejoin="round"/>
<g fill="#ecebea"><path d="M59 753.2 V739.5 A4.3 4.3 0 0 1 63.3 735.2 H88 A4.3 4.3 0 0 1 92.3 739.5 V753.2 Z"/>
<rect x="64.1" y="754" width="22.8" height="1.7"/><rect x="67.5" y="757" width="16" height="2"/>
<rect x="75.1" y="728" width="1.5" height="7.5"/><circle cx="75.8" cy="727.3" r="2.1"/></g>
<circle cx="68.2" cy="742.4" r="2.9" fill="#1e1c35"/><circle cx="83.2" cy="742.4" r="2.9" fill="#1e1c35"/>
<path d="M74.5 785.2 C81.5 785.2 86.6 790 86.6 797 C86.6 802 84.6 804.6 83.6 807.6 C82.8 810.2 84.2 814 85.6 817.5 H71.5 C71.5 815 71.3 813.6 69.5 813.6 C67.2 813.6 65 814.2 63.8 812.8 C63.2 812 63.6 810.8 63.2 810.2 C62.6 809.6 62.4 809 62.8 808.2 C62.2 807.6 62.2 807 62.6 806.2 C61 805.6 59 805.2 58.8 804.4 C58.6 803.4 61.6 800.6 61.8 799 C61.2 792 66 785.2 74.5 785.2Z" fill="#ecebea"/>
<text x="125.80" y="748.70" font-size="11" fill="#ffe3ea" font-weight="400" letter-spacing="1.4" text-anchor="start" >Cm11</text>
<text x="280.20" y="748.70" font-size="11" fill="#ffe3ea" font-weight="400" letter-spacing="1.4" text-anchor="start" >Fm11</text>
<text x="903.50" y="748.70" font-size="11" fill="#ffe3ea" font-weight="400" letter-spacing="1.4" text-anchor="start" >Cm11</text>
<text x="1292.30" y="748.70" font-size="11" fill="#ffe3ea" font-weight="400" letter-spacing="1.4" text-anchor="start" >Fm11</text>
<text transform="translate(592.70 804.20) scale(1.000 1)" font-size="10.8" fill="#9482c2" font-weight="400" letter-spacing="2.89" >G#</text>
<circle cx="1366.1" cy="738.0" r="2.25" fill="#6c6699"/>
<circle cx="1366.1" cy="744.6" r="2.25" fill="#6c6699"/>
<circle cx="1366.1" cy="751.2" r="2.25" fill="#6c6699"/>
<circle cx="1373.6" cy="738.0" r="2.25" fill="#6c6699"/>
<circle cx="1373.6" cy="744.6" r="2.25" fill="#6c6699"/>
<circle cx="1373.6" cy="751.2" r="2.25" fill="#6c6699"/>
<g fill="none" stroke="#504b82" stroke-width="1.1" stroke-linejoin="round"><path d="M1395.2 738.4 H1408.4"/><path d="M1398.9 738.4 V737.0 a1.6 1.6 0 0 1 1.6 -1.6 H1403.3 a1.6 1.6 0 0 1 1.6 1.6 V738.4"/><path d="M1396.3 738.4 V751.8000000000001 a1.6 1.6 0 0 0 1.6 1.6 H1405.7 a1.6 1.6 0 0 0 1.6 -1.6 V738.4"/><path d="M1400 741.4 V750.1 M1403.6 741.4 V750.1"/></g>
<circle cx="1366.1" cy="794.4" r="2.25" fill="#6c6699"/>
<circle cx="1366.1" cy="801" r="2.25" fill="#6c6699"/>
<circle cx="1366.1" cy="807.6" r="2.25" fill="#6c6699"/>
<circle cx="1373.6" cy="794.4" r="2.25" fill="#6c6699"/>
<circle cx="1373.6" cy="801" r="2.25" fill="#6c6699"/>
<circle cx="1373.6" cy="807.6" r="2.25" fill="#6c6699"/>
<g fill="none" stroke="#504b82" stroke-width="1.1" stroke-linejoin="round"><path d="M1395.2 794.8 H1408.4"/><path d="M1398.9 794.8 V793.4 a1.6 1.6 0 0 1 1.6 -1.6 H1403.3 a1.6 1.6 0 0 1 1.6 1.6 V794.8"/><path d="M1396.3 794.8 V808.2 a1.6 1.6 0 0 0 1.6 1.6 H1405.7 a1.6 1.6 0 0 0 1.6 -1.6 V794.8"/><path d="M1400 797.8 V806.5 M1403.6 797.8 V806.5"/></g>
<path d="M213 878 L194.8 889.7 a1.6 1.6 0 0 0 0 2.6 L213 904 a1.5 1.5 0 0 0 2.3 -1.3 V879.3 a1.5 1.5 0 0 0 -2.3 -1.3Z" fill="#3b3768"/>
<path d="M1236.2 878 L1254.6 889.7 a1.6 1.6 0 0 1 0 2.6 L1236.2 904 a1.5 1.5 0 0 1 -2.3 -1.3 V879.3 a1.5 1.5 0 0 1 2.3 -1.3Z" fill="#3b3768"/>
<text transform="translate(256.50 1024.70) scale(1.025 1)" font-size="11.8" fill="#8f87c4" font-weight="700" letter-spacing="0.53" >C4</text>
<text transform="translate(318.38 1024.70) scale(1.038 1)" font-size="11.8" fill="#8f87c4" font-weight="700" letter-spacing="0.53" >D4</text>
<text transform="translate(380.67 1024.70) scale(1.043 1)" font-size="11.8" fill="#8f87c4" font-weight="700" letter-spacing="0.53" >E4</text>
<text transform="translate(442.85 1024.70) scale(1.063 1)" font-size="11.8" fill="#8f87c4" font-weight="700" letter-spacing="0.53" >F4</text>
<text transform="translate(504.04 1024.70) scale(1.032 1)" font-size="11.8" fill="#8f87c4" font-weight="700" letter-spacing="0.53" >G4</text>
<text transform="translate(566.02 1024.70) scale(1.076 1)" font-size="11.8" fill="#ffffff" font-weight="700" letter-spacing="0.53" filter="url(#glow)">A4</text>
<text transform="translate(628.41 1024.70) scale(1.025 1)" font-size="11.8" fill="#8f87c4" font-weight="700" letter-spacing="0.53" >B4</text>
<text transform="translate(690.39 1024.70) scale(1.025 1)" font-size="11.8" fill="#ffffff" font-weight="700" letter-spacing="0.53" filter="url(#glow)">C5</text>
<text transform="translate(752.28 1024.70) scale(1.038 1)" font-size="11.8" fill="#8f87c4" font-weight="700" letter-spacing="0.53" >D5</text>
<text transform="translate(814.57 1024.70) scale(1.043 1)" font-size="11.8" fill="#8f87c4" font-weight="700" letter-spacing="0.53" >E5</text>
<text transform="translate(876.75 1024.70) scale(1.063 1)" font-size="11.8" fill="#8f87c4" font-weight="700" letter-spacing="0.53" >F5</text>
<text transform="translate(937.94 1024.70) scale(1.032 1)" font-size="11.8" fill="#ffffff" font-weight="700" letter-spacing="0.53" filter="url(#glow)">G5</text>
<text transform="translate(999.92 1024.70) scale(1.076 1)" font-size="11.8" fill="#8f87c4" font-weight="700" letter-spacing="0.53" >A5</text>
<text transform="translate(1062.31 1024.70) scale(1.025 1)" font-size="11.8" fill="#8f87c4" font-weight="700" letter-spacing="0.53" >B5</text>
<text transform="translate(1124.29 1024.70) scale(1.025 1)" font-size="11.8" fill="#8f87c4" font-weight="700" letter-spacing="0.53" >C6</text>
<text transform="translate(1186.18 1024.70) scale(1.038 1)" font-size="11.8" fill="#ffffff" font-weight="700" letter-spacing="0.53" filter="url(#glow)">D6</text>
<text transform="translate(112.00 969.50) scale(1.120 1)" font-size="15.8" fill="#ffffff" font-weight="700" letter-spacing="0.89" >G#</text>
<text transform="translate(93.00 1028.20) scale(1.080 1)" font-size="11.9" fill="#8880c7" font-weight="700" letter-spacing="0.65" stroke="#1e1c35" stroke-width="0.4">PRESETS</text>
<circle cx="1276" cy="958.4" r="13.8" fill="#fdfdfb"/>
<circle cx="1268.7" cy="957.9" r="1.35" fill="#1e1c35"/>
<circle cx="1271.1" cy="953.1" r="1.35" fill="#1e1c35"/>
<circle cx="1276.2" cy="950.6999999999999" r="1.35" fill="#1e1c35"/>
<circle cx="1281.1" cy="953.1" r="1.35" fill="#1e1c35"/>
<circle cx="1283.3" cy="957.9" r="1.35" fill="#1e1c35"/>
<rect x="1273.8" y="969.0" width="4.4" height="3.6" rx="1" fill="#1e1c35"/>
<text transform="translate(1300.80 961.30) scale(0.968 1)" font-size="8.1" fill="#ffffff" font-weight="700" letter-spacing="0.36" >DRAG CHORD</text>
<circle cx="1276" cy="1022.5" r="13.8" fill="#fdfdfb"/>
<circle cx="1268.7" cy="1022.0" r="1.35" fill="#1e1c35"/>
<circle cx="1271.1" cy="1017.2" r="1.35" fill="#1e1c35"/>
<circle cx="1276.2" cy="1014.8" r="1.35" fill="#1e1c35"/>
<circle cx="1281.1" cy="1017.2" r="1.35" fill="#1e1c35"/>
<circle cx="1283.3" cy="1022.0" r="1.35" fill="#1e1c35"/>
<rect x="1273.8" y="1033.1" width="4.4" height="3.6" rx="1" fill="#1e1c35"/>
<text transform="translate(1300.80 1025.40) scale(0.964 1)" font-size="8.1" fill="#ffffff" font-weight="700" letter-spacing="0.36" >DRAG SEQ</text>
<path d="M1419.5 1058 L1412 1065.5 M1419.5 1061.8 L1415.8 1065.5" stroke="#4a4591" stroke-width="0.9" fill="none"/>
</svg>
</body></html>
